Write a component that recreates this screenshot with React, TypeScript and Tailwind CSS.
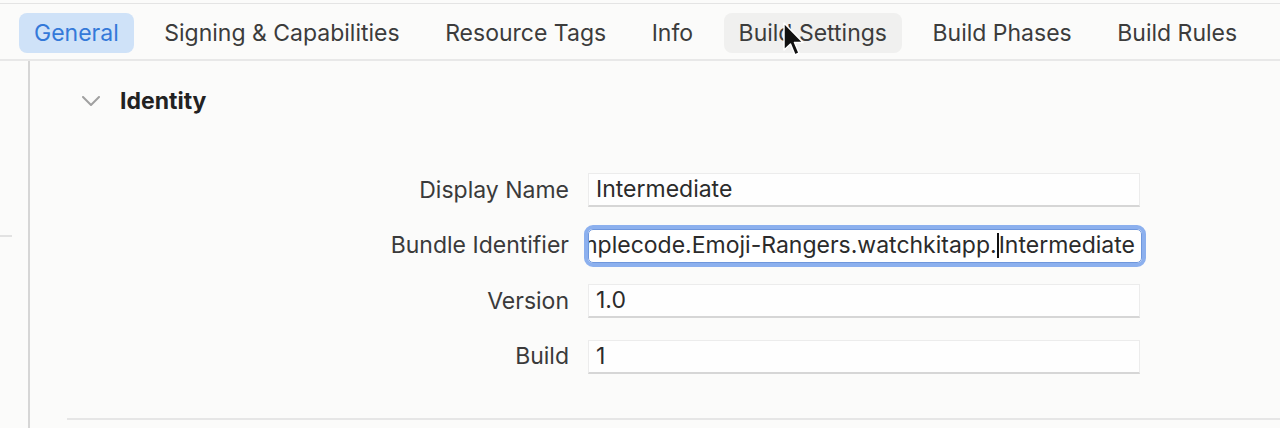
import React from "react";

const tabs = [
  "General",
  "Signing & Capabilities",
  "Resource Tags",
  "Info",
  "Build Settings",
  "Build Phases",
  "Build Rules",
];

function Field({ value }: { value: string }) {
  return (
    <div className="w-[552px] h-[34px] bg-[#fefefe] border border-[#ececec] border-b-2 border-b-[#d6d6d6] flex items-center px-[7px] text-[#2b2b2b]">
      {value}
    </div>
  );
}

function Row({ label, children }: { label: string; children: React.ReactNode }) {
  return (
    <div className="flex items-center h-[34px]">
      <div className="w-[558px] shrink-0 text-right pr-[19px] text-[#3a3a3a]">{label}</div>
      {children}
    </div>
  );
}

export default function App() {
  return (
    <div
      className="relative w-full h-[428px] overflow-hidden bg-[#fbfbfa] text-[23px]"
      style={{ fontFamily: "Inter, 'Noto Sans', sans-serif" }}
    >
      <div className="h-[3px]" />
      <div className="h-[58px] border-t border-[#e4e4e4] border-b-2 border-b-[#e8e8e8] flex items-center pt-[3px] pl-[19px] gap-[15.5px]">
        {tabs.map((t, i) => (
          <div
            key={t}
            className={
              i === 0
                ? "h-[40px] px-[15px] flex items-center rounded-lg bg-[#cfe2f8] text-[#3479d9]"
                : i === 4
                ? "h-[40px] px-[15px] flex items-center rounded-lg bg-[#f0f0ef] text-[#3c3c3c]"
                : "h-[40px] px-[15px] flex items-center rounded-lg text-[#3c3c3c]"
            }
          >
            {t}
          </div>
        ))}
      </div>

      <div className="flex h-[367px]">
        <div className="w-[30px] border-r-2 border-[#d6d6d6] flex flex-col">
          <div className="h-[174px]" />
          <div className="w-[12px] border-t-2 border-[#e2e2e2]" />
        </div>
        <div className="flex-1 flex flex-col">
          <div className="flex items-center h-[40px] mt-[20px] pl-[52px] gap-[20px]">
            <svg width="18" height="10" viewBox="0 0 18 10" fill="none">
              <path d="M1 1 L9 9 L17 1" stroke="#a0a0a0" strokeWidth="2" strokeLinecap="round" strokeLinejoin="round" />
            </svg>
            <span className="font-bold text-[#222]">Identity</span>
          </div>

          <div className="flex flex-col gap-[21.5px] mt-[52px]">
            <Row label="Display Name">
              <Field value="Intermediate" />
            </Row>
            <Row label="Bundle Identifier">
              <div className="w-[554px] h-[34px] bg-white border border-[#6f97dc] outline-[4px] outline-solid outline-[#8cb0ee] rounded-[5px] flex items-center justify-end overflow-hidden pr-[6px] text-[#2b2b2b] whitespace-nowrap">
                <span className="shrink-0">mplecode.Emoji-Rangers.watchkitapp.</span>
                <span className="shrink-0 w-[2px] h-[25px] bg-[#111]" />
                <span className="shrink-0">Intermediate</span>
              </div>
            </Row>
            <Row label="Version">
              <Field value="1.0" />
            </Row>
            <Row label="Build">
              <Field value="1" />
            </Row>
          </div>

          <div className="mt-auto mb-[8px] ml-[37px] border-t-2 border-[#e6e6e6]" />
        </div>
      </div>

      <svg
        className="absolute left-[782px] top-[22px]"
        width="22"
        height="36"
        viewBox="0 0 22 36"
      >
        <path
          d="M2 1 L2 28 L8.5 22 L13 33 L17 31 L12.5 20.5 L21 20.5 Z"
          fill="#111"
          stroke="#fff"
          strokeWidth="1.5"
          strokeLinejoin="round"
        />
      </svg>
    </div>
  );
}
